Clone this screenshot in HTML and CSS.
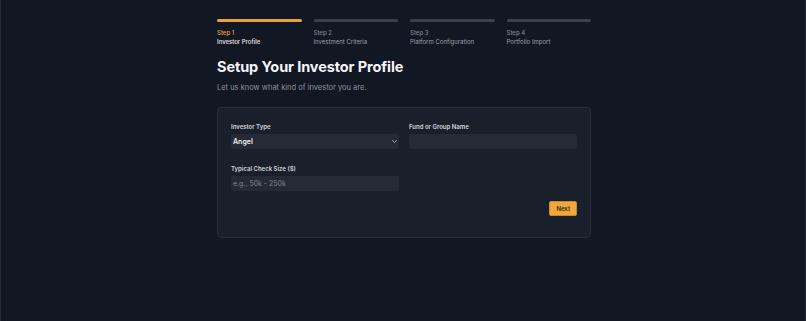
FILE: index.html
```html
<!DOCTYPE html>
<html lang="en">
<head>
    <meta charset="UTF-8">
    <meta name="viewport" content="width=device-width, initial-scale=1.0">
    <title>Investor Onboarding</title>
    <link rel="stylesheet" href="styles.css">
</head>
<body>
    <div class="page">
        <div class="container">
            <!-- steps -->
            <div class="steps">
                <div class="step active">
                    <div class="step-bar"></div>
                    <div class="step-num">Step 1</div>
                    <div class="step-name">Investor Profile</div>
                </div>
                <div class="step">
                    <div class="step-bar"></div>
                    <div class="step-num">Step 2</div>
                    <div class="step-name">Investment Criteria</div>
                </div>
                <div class="step">
                    <div class="step-bar"></div>
                    <div class="step-num">Step 3</div>
                    <div class="step-name">Platform Configuration</div>
                </div>
                <div class="step">
                    <div class="step-bar"></div>
                    <div class="step-num">Step 4</div>
                    <div class="step-name">Portfolio Import</div>
                </div>
            </div>

            <h1 class="title">Setup Your Investor Profile</h1>
            <p class="subtitle">Let us know what kind of investor you are.</p>

            <div class="card">
                <div class="form-grid">
                    <div class="form-group">
                        <label>Investor Type</label>
                        <div class="select-wrap">
                            <select class="form-control">
                                <option>Angel</option>
                                <option>VC Fund</option>
                                <option>Family Office</option>
                            </select>
                            <svg class="chevron" viewBox="0 0 10 6" width="5" height="3"><path d="M1 1l4 4 4-4" fill="none" stroke="#c9ccd3" stroke-width="1.6" stroke-linecap="round" stroke-linejoin="round"/></svg>
                        </div>
                    </div>
                    <div class="form-group">
                        <label>Fund or Group Name</label>
                        <input type="text" class="form-control">
                    </div>
                    <div class="form-group">
                        <label>Typical Check Size ($)</label>
                        <input type="text" class="form-control" placeholder="e.g., 50k - 250k">
                    </div>
                </div>
                <div class="actions">
                    <button type="button" class="btn">Next</button>
                </div>
            </div>
        </div>
    </div>
</body>
</html>
```

FILE: styles.css
```css
* {
    box-sizing: border-box;
}

html, body {
    height: 100%;
}

body {
    margin: 0;
    padding: 0;
    background-color: #121724;
    color: #f3f4f6;
    font-family: Inter, "Noto Sans", sans-serif;
}

.page {
    min-height: 100%;
    border-left: 1px solid #232937;
    border-right: 1px solid #232937;
    padding: 19px 0 0 2px;
}

.container {
    width: 374px;
    margin: 0 auto;
}

.steps {
    display: grid;
    grid-template-columns: repeat(4, 1fr);
    gap: 12px;
}

.step-bar {
    height: 3px;
    border-radius: 2px;
    background-color: #3b404d;
}

.step-num {
    margin-top: 6px;
    font-size: 6px;
    font-weight: 500;
    color: #80858f;
    line-height: 9px;
}

.step-name {
    font-size: 6px;
    color: #9ca0a9;
    line-height: 9px;
}

.step.active .step-bar {
    background-color: #eaa03c;
}

.step.active .step-num {
    color: #eaa03c;
}

.step.active .step-name {
    color: #e8e9ec;
    font-weight: 500;
}

.title {
    margin: 11px 0 0;
    font-size: 14.5px;
    line-height: 20px;
    font-weight: 700;
    color: #f5f6f8;
    letter-spacing: -0.1px;
}

.subtitle {
    margin: 6px 0 0;
    font-size: 7.5px;
    line-height: 10px;
    color: #8d929c;
}

.card {
    margin-top: 14px;
    background-color: #1a1f2c;
    border: 1px solid #272c39;
    border-radius: 4px;
    padding: 14px 13px 21px;
}

.form-grid {
    display: grid;
    grid-template-columns: 1fr 1fr;
    column-gap: 10px;
    row-gap: 15px;
}

.form-group label {
    display: block;
    font-size: 6px;
    font-weight: 600;
    color: #d3d5da;
    line-height: 9px;
    margin-bottom: 3px;
}

.form-control {
    display: block;
    width: 100%;
    height: 15px;
    padding: 0 2px;
    border: 0;
    border-radius: 2px;
    outline: 0;
    background-color: #252a37;
    color: #f1f2f4;
    font-family: inherit;
    font-size: 7px;
}

.form-control::placeholder {
    color: #7d828c;
}

.select-wrap {
    position: relative;
}

select.form-control {
    appearance: none;
    -webkit-appearance: none;
    font-weight: 600;
}

.chevron {
    position: absolute;
    right: 2px;
    top: 6px;
}

.actions {
    display: flex;
    justify-content: flex-end;
    margin-top: 10px;
}

.btn {
    border: 1px solid #c98a2e;
    border-radius: 2px;
    padding: 0 6px;
    height: 15px;
    font-family: inherit;
    font-size: 6px;
    font-weight: 600;
    color: #3a2a12;
    background-color: #efa73e;
}
```
